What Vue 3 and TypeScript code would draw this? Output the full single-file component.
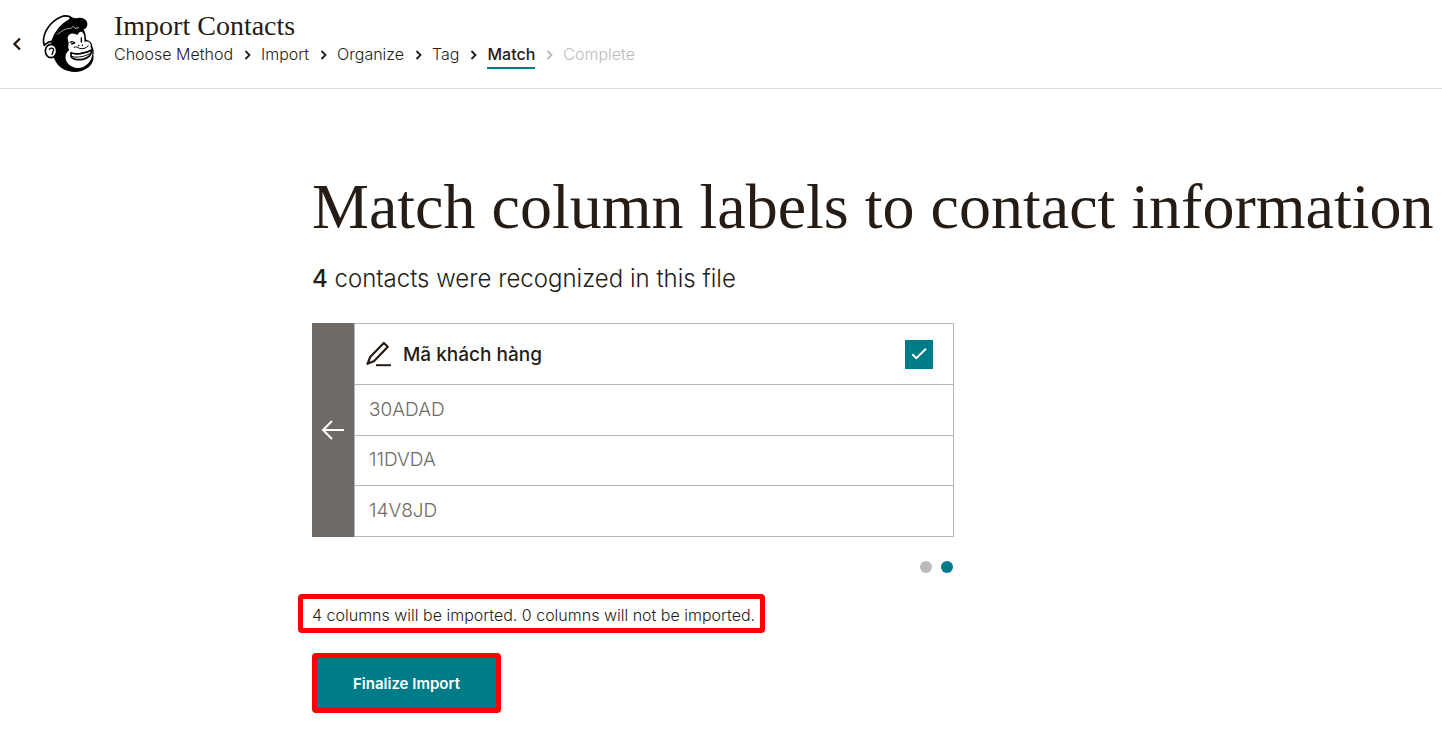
<script setup lang="ts">
import { ref } from 'vue'

interface Step {
  label: string
  state: 'done' | 'current' | 'upcoming'
}

const steps: Step[] = [
  { label: 'Choose Method', state: 'done' },
  { label: 'Import', state: 'done' },
  { label: 'Organize', state: 'done' },
  { label: 'Tag', state: 'done' },
  { label: 'Match', state: 'current' },
  { label: 'Complete', state: 'upcoming' },
]

const rows: string[] = ['30ADAD', '11DVDA', '14V8JD']
const included = ref(true)
const pages = [1, 2]
const activePage = ref(2)
</script>

<template>
  <header class="topbar">
    <button class="back" type="button" aria-label="Back">
      <svg width="10" height="14" viewBox="0 0 10 14"><path d="M8 1.5 2.5 7 8 12.5" fill="none" stroke="#241c15" stroke-width="2.4" /></svg>
    </button>
    <svg class="logo" width="60" height="66" viewBox="0 0 180 198" aria-hidden="true">
      <path fill="#000" d="M40 92C50 72 72 58 92 54L136 58C144 68 143 82 145 90C156 92 163 99 163 110C168 119 168 128 166 134C169 150 161 166 147 175C133 186 109 189 91 183C71 178 55 163 49 146L38 120Z" />
      <path fill="#000" d="M86 20C98 15 104 25 112 25C128 21 142 24 147 36C151 48 144 60 132 59C112 52 91 58 71 68L50 84C60 58 76 40 92 30Z" />
      <path fill="#fff" stroke="#000" stroke-width="5" stroke-linejoin="round" d="M19 106C11 85 23 54 47 34C62 22 80 15 93 19C99 21 98 28 93 31C69 44 52 65 42 94C34 94 26 99 19 106Z" />
      <path fill="none" stroke="#fff" stroke-width="2" stroke-linecap="round" d="M60 72C74 60 86 55 98 55L106 49L111 55L122 53" />
      <path fill="#fff" d="M91 93C86 82 91 73 100 71C108 69 114 75 119 74C122 68 127 63 133 67C140 72 139 84 140 96C151 92 159 98 158 107C156 111 163 118 163 127C164 145 153 164 134 172C121 177 107 173 99 168C86 160 81 148 83 137C84 129 90 124 94 120C87 112 94 104 91 93Z" />
      <path fill="#fff" stroke="#000" stroke-width="5" stroke-linecap="round" stroke-linejoin="round" d="M99 128C109 135 143 131 161 120C162 133 152 145 134 148C117 151 99 147 99 137Z" />
      <path fill="none" stroke="#000" stroke-width="3" stroke-linecap="round" d="M103 140C121 144 145 139 158 129M108 112C114 108 119 112 124 115C133 118 144 115 151 108" />
      <path fill="none" stroke="#000" stroke-width="4" stroke-linecap="round" d="M97 97C101 94 107 95 110 99L101 102M130 84V96M122 106V107M133 105V106" />
      <ellipse cx="39" cy="123" rx="17" ry="20" fill="#fff" stroke="#000" stroke-width="5" />
      <path fill="none" stroke="#000" stroke-width="4" stroke-linecap="round" d="M34 118C40 111 50 116 46 123C43 127 45 131 42 133" />
    </svg>
    <div class="titles">
      <h2>Import Contacts</h2>
      <nav aria-label="Progress">
        <ol class="steps">
          <li v-for="(step, i) in steps" :key="step.label" :class="step.state">
            <svg v-if="i > 0" width="7" height="12" viewBox="0 0 7 12" aria-hidden="true"><path d="M1.5 1 5.5 5l-4 4" fill="none" stroke="currentColor" stroke-width="1.8" /></svg>
            <a v-if="step.state === 'done'" href="#">{{ step.label }}</a>
            <span v-else :aria-current="step.state === 'current' ? 'step' : undefined">{{ step.label }}</span>
          </li>
        </ol>
      </nav>
    </div>
  </header>

  <main class="content">
    <h1>Match column labels to contact information</h1>
    <p class="summary"><strong>4</strong> contacts were recognized in this file</p>

    <section class="matcher">
      <div class="card">
        <button class="previous" type="button" aria-label="Previous column">
          <svg width="24" height="20" viewBox="0 0 24 20"><path d="M23 10H2M11 1 2 10l9 9" fill="none" stroke="#fff" stroke-width="2" /></svg>
        </button>
        <table>
          <thead>
            <tr>
              <th scope="col">
                <div class="column-head">
                  <button class="edit" type="button" aria-label="Edit column label">
                    <svg width="26" height="26" viewBox="0 0 26 26"><path d="M17.8 2 21.8 5.8 8.2 20 1.5 22.8 4.2 16Z" fill="none" stroke="#241c15" stroke-width="2.2" stroke-linejoin="round" /><path d="M10 24.2H25" stroke="#241c15" stroke-width="2" /></svg>
                  </button>
                  <label for="include-column">Mã khách hàng</label>
                  <input id="include-column" v-model="included" type="checkbox" />
                  <svg class="tick" width="28" height="29" viewBox="0 0 28 29" aria-hidden="true"><path v-if="included" d="M7.3 14.2 11.3 18.2 21 8.7" fill="none" stroke="#fff" stroke-width="2" /></svg>
                </div>
              </th>
            </tr>
          </thead>
          <tbody>
            <tr v-for="row in rows" :key="row"><td>{{ row }}</td></tr>
          </tbody>
        </table>
      </div>
      <div class="pager">
        <button
          v-for="page in pages"
          :key="page"
          type="button"
          :class="{ active: page === activePage }"
          :aria-label="`Page ${page}`"
          @click="activePage = page"
        ></button>
      </div>
    </section>

    <p class="notice">4 columns will be imported. 0 columns will not be imported.</p>
    <button class="finalize" type="button">Finalize Import</button>
  </main>
</template>

<style>
body {
  background: #fff;
}
</style>

<style scoped>
* {
  box-sizing: border-box;
}

.topbar,
.content,
button {
  font-family: Inter, 'Liberation Sans', sans-serif;
  color: #241c15;
}

h1,
h2,
p,
ol {
  margin: 0;
  padding: 0;
}

button {
  border: 0;
  padding: 0;
  background: none;
  cursor: pointer;
}

svg {
  display: block;
}

.topbar {
  display: flex;
  align-items: flex-start;
  height: 89px;
  padding: 10px 10px 0;
  border-bottom: 1px solid #dedddc;
}

.back {
  width: 28px;
  padding: 27px 0 0 2px;
}

.logo {
  flex: none;
}

.titles {
  padding-left: 16px;
}

h2 {
  font: 400 28px/32px 'Liberation Serif', serif;
}

.steps {
  display: flex;
  gap: 11px;
  list-style: none;
  font-size: 16px;
  font-weight: 300;
  line-height: 24px;
}

.steps li {
  display: flex;
  align-items: center;
  gap: 10px;
  height: 27px;
}

.steps a,
.steps span {
  height: 27px;
  color: inherit;
  text-decoration: none;
}

.steps .current span {
  border-bottom: 2px solid #007c89;
  font-weight: 500;
}

.steps .upcoming {
  color: #bdbbb9;
}

.content {
  padding: 86px 0 26px 312px;
}

h1 {
  font: 400 64px/64px 'Liberation Serif', serif;
  white-space: nowrap;
}

.summary {
  margin-top: 24px;
  font-size: 24px;
  font-weight: 300;
  line-height: 32px;
}

.summary strong {
  font-weight: 500;
}

.matcher {
  max-width: 642px;
  margin-top: 28px;
}

.card {
  display: flex;
}

.previous {
  display: flex;
  flex: none;
  align-items: center;
  justify-content: center;
  width: 42px;
  background: #6f6a65;
}

table {
  flex: 1;
  border-collapse: collapse;
}

th,
td {
  border: 1px solid #b8b6b4;
  padding: 0 20px 2px 14px;
  text-align: left;
}

th {
  height: 61px;
  padding: 0 20px 0 11px;
}

td {
  height: 51px;
  color: #6f6a65;
  font-size: 19px;
  font-weight: 300;
}

tr:nth-child(2) td {
  height: 50px;
}

.column-head {
  display: flex;
  align-items: center;
  position: relative;
}

.column-head label {
  flex: 1;
  margin-left: 11px;
  font-size: 19px;
  font-weight: 500;
}

.column-head input {
  appearance: none;
  width: 28px;
  height: 29px;
  margin: 0;
  border: 1px solid #007c89;
}

.column-head input:checked {
  background: #007c89;
}

.tick {
  position: absolute;
  right: 0;
  top: 0;
  pointer-events: none;
}

.pager {
  display: flex;
  justify-content: flex-end;
  gap: 9px;
  margin-top: 24px;
  padding-right: 1px;
}

.pager button {
  width: 12px;
  height: 12px;
  border-radius: 50%;
  background: #bdbbb9;
}

.pager button.active {
  background: #007c89;
}

.notice {
  width: fit-content;
  margin: 21px 0 0 -14px;
  padding: 3px 5px 0 9px;
  border: 5px solid #f00;
  border-radius: 4px;
  font-size: 16px;
  font-weight: 300;
  line-height: 26px;
}

.finalize {
  display: block;
  height: 60px;
  margin-top: 20px;
  padding: 0 36px;
  border: 5px solid #f00;
  border-radius: 4px;
  background: #007c89;
  color: #fff;
  font-size: 15px;
  font-weight: 600;
}
</style>
